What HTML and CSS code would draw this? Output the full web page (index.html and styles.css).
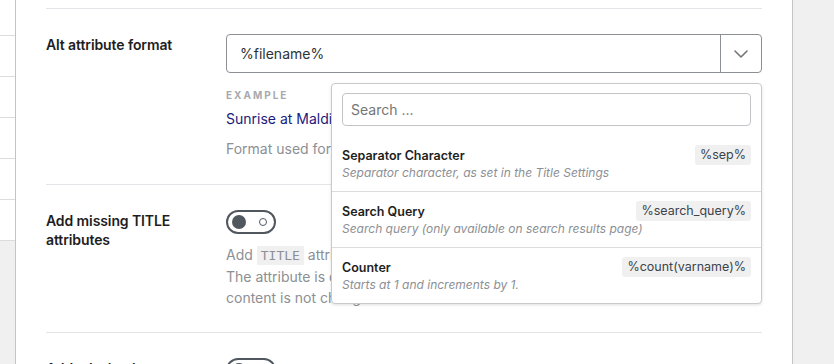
FILE: index.html
```html
<!DOCTYPE html>
<html>
<head>
<meta charset="utf-8">
<link rel="stylesheet" href="styles.css">
</head>
<body>
<div class="layout">
  <nav class="sidebar">
    <div class="nav-item"></div>
    <div class="nav-item"></div>
    <div class="nav-item"></div>
    <div class="nav-item"></div>
    <div class="nav-item"></div>
    <div class="nav-item"></div>
  </nav>
  <main class="main">
    <section class="row first">
      <div class="label">Alt attribute format</div>
      <div class="field">
        <div class="select-wrap">
          <div class="select">
            <span class="select-value">%filename%</span>
            <span class="select-arrow">
              <svg width="14" height="8" viewBox="0 0 14 8"><path d="M1 1l6 6 6-6" fill="none" stroke="#757575" stroke-width="1.6" stroke-linecap="round" stroke-linejoin="round"/></svg>
            </span>
          </div>
          <div class="dropdown">
            <div class="search-box"><span class="search-ph">Search ...</span></div>
            <ul class="vars">
              <li class="var">
                <div class="var-head"><span class="var-name">Separator Character</span><span class="chip">%sep%</span></div>
                <div class="var-desc">Separator character, as set in the Title Settings</div>
              </li>
              <li class="var">
                <div class="var-head"><span class="var-name">Search Query</span><span class="chip">%search_query%</span></div>
                <div class="var-desc">Search query (only available on search results page)</div>
              </li>
              <li class="var">
                <div class="var-head"><span class="var-name">Counter</span><span class="chip">%count(varname)%</span></div>
                <div class="var-desc">Starts at 1 and increments by 1.</div>
              </li>
            </ul>
          </div>
        </div>
        <div class="example-label">Example</div>
        <div class="example">Sunrise at Maldives | Rank Math</div>
        <div class="desc">Format used for the new <code>alt</code> attribute values.</div>
      </div>
    </section>
    <section class="row">
      <div class="label">Add missing TITLE attributes</div>
      <div class="field">
        <div class="toggle"><span class="knob"></span><span class="ring"></span></div>
        <div class="desc toggle-desc">Add <code>TITLE</code> attribute for all images without a title attribute.<br>The attribute is dynamically applied when the content is displayed, and<br>content is not changed.</div>
      </div>
    </section>
    <section class="row">
      <div class="label">Add missing image caption</div>
      <div class="field">
        <div class="toggle"><span class="knob"></span><span class="ring"></span></div>
      </div>
    </section>
  </main>
  <aside class="rightbar"></aside>
</div>
</body>
</html>
```

FILE: styles.css
```css
* { box-sizing: border-box; }
html, body { margin: 0; padding: 0; }
body {
  background: #f0f0f1;
  font-family: Inter, "Noto Sans", "Liberation Sans", sans-serif;
  font-size: 14px;
  color: #1e1e1e;
  width: 834px;
  height: 364px;
  overflow: hidden;
}
.layout { display: flex; height: 364px; overflow: hidden; }
.sidebar {
  width: 16px;
  flex: none;
  border-right: 1px solid #c3c4c7;
  background: #f0f0f1;
}
.nav-item {
  height: 41px;
  background: #fff;
  border-bottom: 1px solid #dcdcde;
}
.nav-item:first-child { height: 36px; }
.main {
  width: 777px;
  flex: none;
  background: #fff;
  border-right: 1px solid #c3c4c7;
  padding: 8px 30px 0 30px;
}
.rightbar { flex: 1; background: #f0f0f1; }
.row {
  display: flex;
  border-top: 1px solid #e2e4e7;
  padding: 25px 0 24px;
}
.label {
  width: 180px;
  flex: none;
  font-weight: 600;
  font-size: 14px;
  line-height: 19px;
  padding-top: 1px;
  padding-right: 20px;
  letter-spacing: -0.1px;
}
.field { flex: 1; }
.select-wrap { position: relative; }
.select {
  height: 39px;
  border: 1px solid #8c8f94;
  border-radius: 4px;
  display: flex;
  align-items: center;
}
.select-value {
  flex: 1;
  padding-left: 13px;
  font-size: 14px;
  color: #2c3338;
}
.select-arrow {
  width: 41px;
  height: 100%;
  border-left: 1px solid #8c8f94;
  display: flex;
  align-items: center;
  justify-content: center;
}
.dropdown {
  position: absolute;
  top: 49px;
  left: 105px;
  right: 0;
  background: #fff;
  border: 1px solid #c9cacc;
  border-radius: 4px;
  box-shadow: 0 1px 3px rgba(0,0,0,0.12);
  padding-top: 9px;
  z-index: 5;
}
.search-box {
  margin: 0 10px;
  height: 33px;
  border: 1px solid #c3c4c7;
  border-radius: 4px;
  display: flex;
  align-items: center;
  padding-left: 8px;
}
.search-ph { color: #757575; font-size: 14px; }
.vars { list-style: none; margin: 10px 0 0; padding: 0; }
.var {
  padding: 9px 10px 10px;
  border-top: 1px solid #dcdcde;
}
.var:first-child { border-top: none; }
.var-head {
  display: flex;
  justify-content: space-between;
  align-items: center;
  height: 20px;
}
.var-name { font-weight: 600; font-size: 12.5px; color: #1e1e1e; }
.chip {
  background: #f0f0f1;
  border-radius: 3px;
  padding: 0 5px;
  font-size: 12.5px;
  line-height: 20px;
  color: #3c434a;
}
.var-desc {
  font-style: italic;
  font-size: 12px;
  line-height: 16px;
  color: #8c8f94;
  margin-top: 0;
}
.example-label {
  margin-top: 14px;
  font-size: 10px;
  line-height: 16px;
  font-weight: 700;
  letter-spacing: 2px;
  text-transform: uppercase;
  color: #a7aaad;
}
.example {
  margin-top: 6px;
  line-height: 20px;
  color: #1b1a7e;
}
.desc {
  color: #8c8f94;
  line-height: 21px;
  margin-top: 9px;
}
code {
  font-family: "DejaVu Sans Mono", "Liberation Mono", monospace;
  font-size: 13px;
  background: #f0f0f1;
  padding: 2px 4px;
  color: #8c8f94;
}
.toggle {
  width: 50px;
  height: 24px;
  border: 2px solid #50575e;
  border-radius: 12px;
  display: flex;
  align-items: center;
  justify-content: space-between;
  padding: 0 7px 0 4px;
}
.knob { width: 14px; height: 14px; border-radius: 50%; background: #50575e; }
.ring { width: 8px; height: 8px; border-radius: 50%; border: 1.5px solid #50575e; }
.toggle-desc { margin-top: 10px; }
```
